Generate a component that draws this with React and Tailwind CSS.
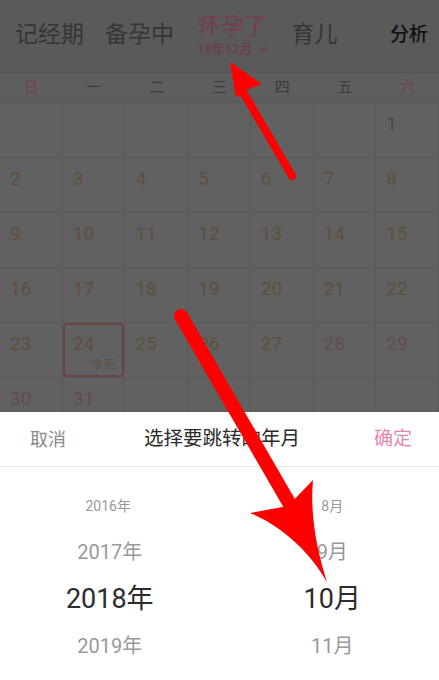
const weekdays = ["日", "一", "二", "三", "四", "五", "六"];

const weeks = [
  [null, null, null, null, null, null, 1],
  [2, 3, 4, 5, 6, 7, 8],
  [9, 10, 11, 12, 13, 14, 15],
  [16, 17, 18, 19, 20, 21, 22],
  [23, 24, 25, 26, 27, 28, 29],
  [30, 31, null, null, null, null, null],
];

const pinkDays = [28, 29, 30, 31];

function DayCell({ day }) {
  if (!day) return <div className="h-[55px] border-r border-b border-[#595959]" />;
  const today = day === 24;
  const color = pinkDays.includes(day) ? "text-[#644a50]" : day === 1 ? "text-[#484848]" : "text-[#5f4f3a]";
  return (
    <div className="relative h-[55px] border-r border-b border-[#595959]">
      {today && <div className="absolute inset-0 rounded-[4px] border-2 border-[#6a4442]" />}
      <div className={`relative pl-[10px] pt-[9px] text-[19px] leading-[24px] ${color}`}>{day}</div>
      {today && (
        <div className="absolute bottom-[5px] right-[10px] text-[12px] leading-[14px] text-[#624f40]">今天</div>
      )}
    </div>
  );
}

function Arrows() {
  return (
    <svg className="pointer-events-none absolute inset-0" width="439" height="680" viewBox="0 0 439 680">
      <line x1="292" y1="176" x2="243" y2="92" stroke="#ff0000" strokeWidth="8" strokeLinecap="round" />
      <path d="M230,62 L236,98 L246,90 L262,84 Z" fill="#ff0000" />
      <line x1="181" y1="316" x2="292" y2="508" stroke="#ff0000" strokeWidth="14" strokeLinecap="round" />
      <path d="M327,582 C310,552 282,526 250,513 L288,506 L313,480 C310,512 316,548 327,582 Z" fill="#ff0000" />
    </svg>
  );
}

export default function App() {
  return (
    <div className="relative h-[680px] w-[439px] overflow-hidden bg-white font-['Roboto','Noto_Sans_CJK_SC',sans-serif]">
      {/* top tabs, dimmed */}
      <div className="flex h-[72px] items-start bg-[#5a5a5a] pl-[15px] pr-[11px]">
        <div className="mt-[21px] text-[23px] leading-[28px] text-[#353535]">记经期</div>
        <div className="ml-[21px] mt-[21px] text-[23px] leading-[28px] text-[#353535]">备孕中</div>
        <div className="ml-[23px] mt-[13px] flex flex-col items-center">
          <div className="text-[23px] leading-[28px] text-[#773a54]">怀孕了</div>
          <div className="flex items-center gap-[4px] text-[13px] font-medium leading-[16px] text-[#6e3c50]">
            <span>18年12月</span>
            <svg width="11" height="7" viewBox="0 0 11 7">
              <path d="M1,1 L5.5,5.5 L10,1" stroke="#6e3c50" strokeWidth="1.8" fill="none" />
            </svg>
          </div>
        </div>
        <div className="ml-[24px] mt-[21px] text-[23px] leading-[28px] text-[#353535]">育儿</div>
        <div className="ml-auto mt-[23px] text-[19px] font-medium leading-[24px] text-[#111111]">分析</div>
      </div>

      {/* weekday header */}
      <div className="grid h-[31px] grid-cols-7 border-t border-b border-[#565656] bg-[#5e5e5e]">
        {weekdays.map((w, i) => (
          <div
            key={w}
            className={`flex items-center justify-center text-[15px] ${i === 0 || i === 6 ? "text-[#753e51]" : "text-[#3b3b3b]"}`}
          >
            {w}
          </div>
        ))}
      </div>

      {/* month grid */}
      <div className="h-[309px] overflow-hidden bg-[#616161]">
        {weeks.map((week, r) => (
          <div key={r} className="grid grid-cols-7">
            {week.map((d, c) => (
              <DayCell key={c} day={d} />
            ))}
          </div>
        ))}
      </div>

      {/* bottom sheet */}
      <div className="bg-white">
        <div className="flex h-[55px] items-center justify-between border-b border-[#e6e6e6] pl-[30px] pr-[27px]">
          <span className="text-[18px] text-[#8a8a8a]">取消</span>
          <span className="ml-[4px] text-[19.5px] text-[#2a2a2a]">选择要跳转的年月</span>
          <span className="text-[19px] text-[#e586b1]">确定</span>
        </div>
        <div className="grid grid-cols-2 pt-[16px]">
          <div className="flex flex-col items-center text-[#999999]">
            <div className="flex h-[46px] items-center pr-[3px] text-[14px]">2016年</div>
            <div className="flex h-[46px] items-center text-[20px]">2017年</div>
            <div className="flex h-[48px] items-center text-[27px] text-[#2c2c2c]">2018年</div>
            <div className="flex h-[46px] items-center text-[20px]">2019年</div>
          </div>
          <div className="flex flex-col items-center pl-[6px] text-[#999999]">
            <div className="flex h-[46px] items-center text-[14px]">8月</div>
            <div className="flex h-[46px] items-center text-[20px]">9月</div>
            <div className="flex h-[48px] items-center text-[27px] text-[#2c2c2c]">10月</div>
            <div className="flex h-[46px] items-center text-[20px]">11月</div>
          </div>
        </div>
      </div>

      <Arrows />
    </div>
  );
}
